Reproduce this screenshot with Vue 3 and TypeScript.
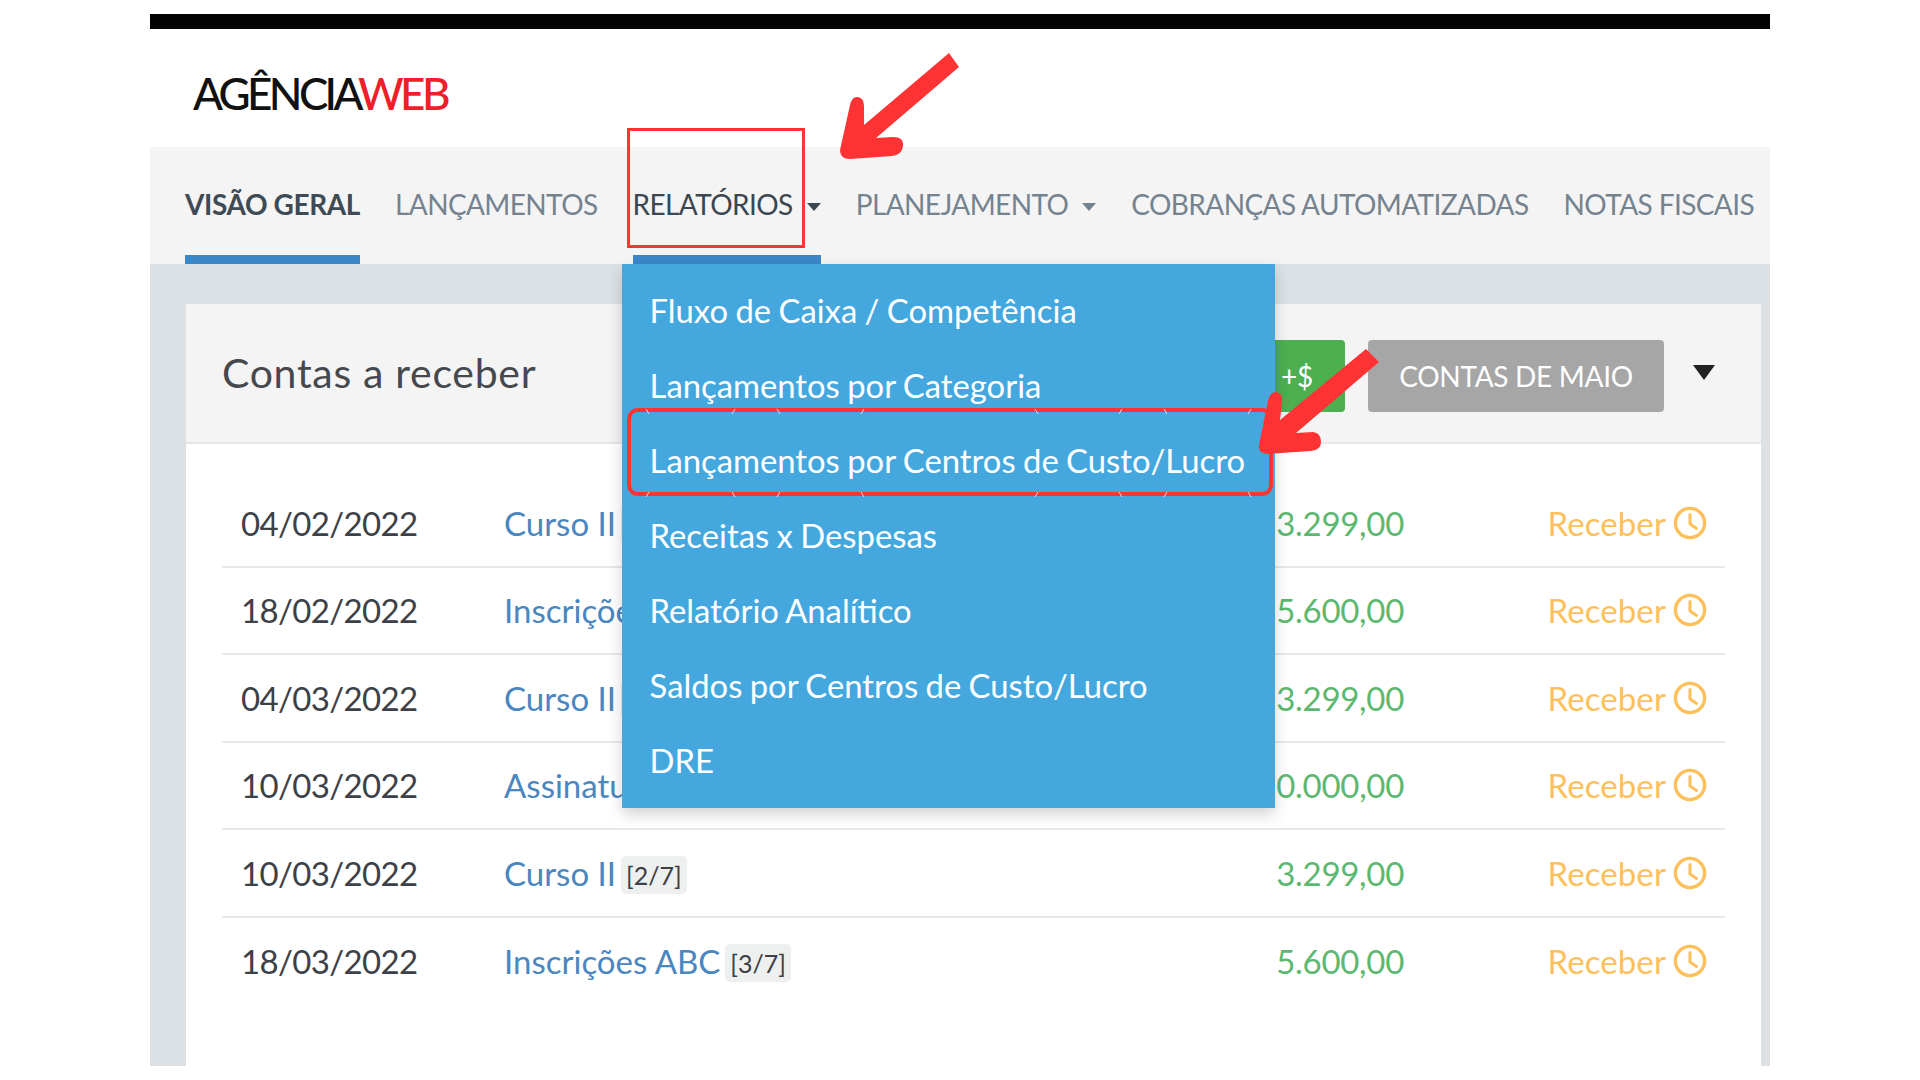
<script setup lang="ts">
interface Row { date: string; name: string; badge: string; value: string }
const tabs = [
  { label: 'VISÃO GERAL', active: true, caret: false, open: false },
  { label: 'LANÇAMENTOS', active: false, caret: false, open: false },
  { label: 'RELATÓRIOS', active: false, caret: true, open: true },
  { label: 'PLANEJAMENTO', active: false, caret: true, open: false },
  { label: 'COBRANÇAS AUTOMATIZADAS', active: false, caret: false, open: false },
  { label: 'NOTAS FISCAIS', active: false, caret: false, open: false },
]
const menu = [
  'Fluxo de Caixa / Competência',
  'Lançamentos por Categoria',
  'Lançamentos por Centros de Custo/Lucro',
  'Receitas x Despesas',
  'Relatório Analítico',
  'Saldos por Centros de Custo/Lucro',
  'DRE',
]
const rows: Row[] = [
  { date: '04/02/2022', name: 'Curso II', badge: '[1/7]', value: '3.299,00' },
  { date: '18/02/2022', name: 'Inscrições ABC', badge: '[1/7]', value: '5.600,00' },
  { date: '04/03/2022', name: 'Curso II', badge: '[1/7]', value: '3.299,00' },
  { date: '10/03/2022', name: 'Assinatura', badge: '[1/7]', value: '10.000,00' },
  { date: '10/03/2022', name: 'Curso II', badge: '[2/7]', value: '3.299,00' },
  { date: '18/03/2022', name: 'Inscrições ABC', badge: '[3/7]', value: '5.600,00' },
]
</script>

<template>
  <div class="page">
    <div class="frame">
      <div class="topbar"></div>
      <header class="brand">
        <span class="logo">AGÊNCIA<b>WEB</b></span>
      </header>
      <nav class="nav">
        <div
          v-for="t in tabs"
          :key="t.label"
          class="tab"
          :class="{ active: t.active, open: t.open }"
        >
          <span>{{ t.label }}</span>
          <i v-if="t.caret" class="caret"></i>
          <ul v-if="t.open" class="menu">
            <li v-for="(m, i) in menu" :key="m" :class="{ hl: i === 2 }">{{ m }}</li>
          </ul>
        </div>
      </nav>
      <main class="main">
        <section class="card">
          <div class="card-head">
            <h2>Contas a receber</h2>
            <div class="actions">
              <button class="btn green">+$</button>
              <button class="btn gray">CONTAS DE MAIO</button>
              <i class="caret big"></i>
            </div>
          </div>
          <div class="list">
            <div v-for="(r, i) in rows" :key="i" class="row">
              <span class="date">{{ r.date }}</span>
              <span class="name"><a>{{ r.name }}</a><em>{{ r.badge }}</em></span>
              <span class="value">{{ r.value }}</span>
              <span class="act">
                Receber
                <svg viewBox="0 0 34 34" width="34" height="34" fill="none" stroke="currentColor" stroke-width="3.4" stroke-linecap="round" stroke-linejoin="round">
                  <circle cx="17" cy="17" r="14.6" />
                  <path d="M17 8.5V18l6.5 4.5" stroke-width="3" />
                </svg>
              </span>
            </div>
          </div>
        </section>
      </main>
    </div>
    <div class="mark-box"></div>
    <svg class="arrows" viewBox="0 0 1920 1080" width="1920" height="1080" aria-hidden="true">
      <path fill="none" stroke="#ffd9d9" stroke-width="1" d="M646 409l3 5M735 409l-3 5M777 409l3 5M864 409l-3 5M1035 409l3 5M1122 409l-3 5M1164 409l3 5M1251 409l-3 5M646 497l3-5M735 497l-3-5M777 497l3-5M864 497l-3-5M1035 497l3-5M1122 497l-3-5M1164 497l3-5M1251 497l-3-5" />
      <path fill="#ff3333" d="M949 53 L959 67 L876 138 L893 137 Q904 137 903 146 Q902 155 892 156 L850 159 Q840 159 840 150 L850 105 Q852 96 858 97 Q864 98 864 106 L864 125 Z" />
      <path fill="#ff3333" d="M1366 349 L1379 362 L1296 433 L1313 432 Q1321 433 1321 442 Q1321 450 1311 451 L1268 454 Q1258 454 1259 445 L1268 401 Q1270 392 1276 392 Q1283 393 1282 402 L1280 420 Z" />
    </svg>
  </div>
</template>

<style scoped>
.page {
  position: relative;
  width: 1920px;
  height: 1080px;
  overflow: hidden;
  background: #fff;
  font-family: Lato, "Liberation Sans", sans-serif;
}
.frame {
  margin: 14px 0 0 150px;
  width: 1620px;
}
.topbar {
  height: 15px;
  background: #030303;
}
.brand {
  height: 118px;
  display: flex;
  align-items: center;
  padding-left: 43px;
  padding-top: 10px;
  box-sizing: border-box;
}
.logo {
  font-size: 44px;
  font-weight: 500;
  letter-spacing: -3.6px;
  color: #111;
  line-height: 1;
}
.logo b {
  font-weight: 500;
  color: #ee1f2a;
}
.nav {
  height: 117px;
  background: #f4f4f4;
  display: flex;
  gap: 35px;
  padding-left: 35px;
  box-sizing: border-box;
  color: #74838f;
  font-size: 28px;
  letter-spacing: -0.6px;
}
.tab {
  position: relative;
  display: flex;
  align-items: center;
  gap: 14px;
  padding-top: 5px;
  border-bottom: 9px solid transparent;
  box-sizing: border-box;
  white-space: nowrap;
}
.tab.active {
  color: #3e4a54;
  font-weight: 700;
  letter-spacing: -0.4px;
  border-color: #3b88c9;
}
.tab.open {
  color: #3a4650;
  border-color: #3b88c9;
}
.caret {
  display: block;
  width: 0;
  height: 0;
  border-left: 7.5px solid transparent;
  border-right: 7.5px solid transparent;
  border-top: 8px solid currentColor;
  margin-top: 6px;
}
.caret.big {
  border-left-width: 11px;
  border-right-width: 11px;
  border-top-width: 15px;
  color: #222;
  margin: 0 0 0 6px;
}
.menu {
  position: absolute;
  top: 100%;
  left: -11px;
  margin: 9px 0 0;
  padding: 0;
  list-style: none;
  width: 653px;
  height: 544px;
  box-sizing: border-box;
  padding-top: 10px;
  background: #44a8df;
  color: #fff;
  font-size: 32.8px;
  font-weight: 400;
  letter-spacing: 0;
  word-spacing: -1px;
  box-shadow: 0 6px 14px rgba(0, 0, 0, 0.18);
  z-index: 3;
}
.menu li {
  position: relative;
  height: 75px;
  line-height: 73px;
  padding-left: 28px;
}
.menu li.hl::after {
  content: "";
  position: absolute;
  left: 5px;
  right: 2px;
  height: 88px;
  top: -16px;
  box-sizing: border-box;
  border: 4px solid #ff3333;
  border-radius: 11px;
}
.main {
  height: 802px;
  background: #dce1e5;
  padding: 40px 9px 0 36px;
  box-sizing: border-box;
}
.card {
  height: 100%;
  background: #fff;
  display: flex;
  flex-direction: column;
}
.card-head {
  height: 140px;
  background: #f4f4f4;
  border-bottom: 2px solid #e7e7e7;
  box-sizing: border-box;
  display: flex;
  align-items: center;
  justify-content: space-between;
  padding: 0 46px 2px 36px;
}
.card-head h2 {
  margin: 0;
  font-size: 41px;
  font-weight: 400;
  letter-spacing: 0.7px;
  color: #45494d;
}
.actions {
  display: flex;
  align-items: center;
  gap: 23px;
}
.btn {
  height: 72px;
  border: 0;
  border-radius: 4px;
  color: #fff;
  font: 400 28px Lato, "Liberation Sans", sans-serif;
  letter-spacing: -0.3px;
  padding: 0;
  margin-top: 8px;
}
.btn.green {
  width: 80px;
  background: #4caf50;
  text-align: left;
  padding-left: 16px;
}
.btn.gray {
  width: 296px;
  background: #a6a6a6;
}
.list {
  padding: 36px 36px 0 36px;
}
.row {
  display: flex;
  align-items: center;
  height: 87.5px;
  border-bottom: 2px solid #e8e8e8;
  box-sizing: border-box;
  padding: 0 18px 0 19px;
  font-size: 33px;
}
.row:last-child {
  border-bottom: 0;
}
.date {
  width: 263px;
  color: #3c4148;
  letter-spacing: -0.65px;
}
.name {
  flex: 1;
  display: flex;
  align-items: center;
  color: #4a86c0;
}
.name em {
  font-style: normal;
  font-size: 25px;
  color: #3c4148;
  background: #eef0f0;
  border-radius: 5px;
  padding: 5px 5px;
  margin: 4px 0 0 5px;
  line-height: 28px;
}
.value {
  color: #5cb870;
  text-align: right;
  letter-spacing: -0.3px;
}
.act {
  width: 303px;
  display: flex;
  align-items: center;
  justify-content: flex-end;
  gap: 7px;
  color: #fdc05a;
  letter-spacing: 0.1px;
}
.mark-box {
  position: absolute;
  left: 627px;
  top: 128px;
  width: 178px;
  height: 120px;
  box-sizing: border-box;
  border: 3.5px solid #ff3333;
  z-index: 4;
}
.arrows {
  position: absolute;
  left: 0;
  top: 0;
  z-index: 5;
  pointer-events: none;
}
</style>
